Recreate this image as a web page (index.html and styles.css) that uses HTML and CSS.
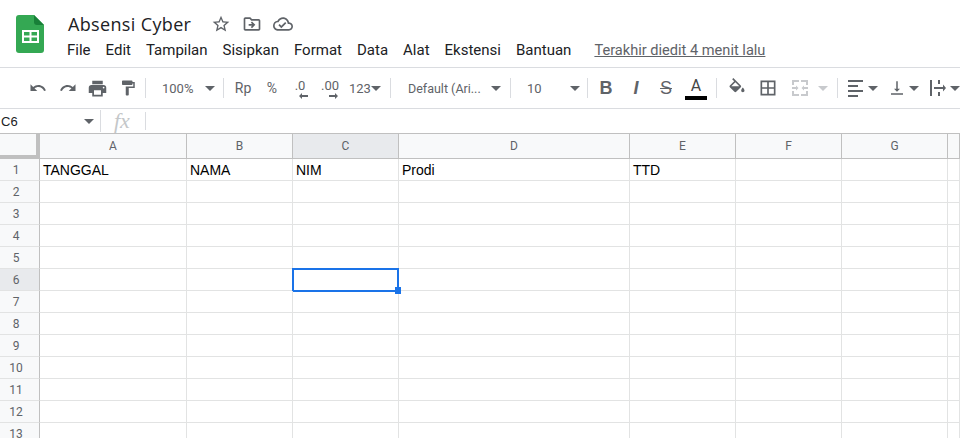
FILE: index.html
```html
<!DOCTYPE html>
<html lang="id">
<head>
  <meta charset="UTF-8" />
  <title>Absensi Cyber</title>
  <link rel="stylesheet" href="styles.css">
</head>
<body>
  <header class="topbar">
    <svg class="logo" width="28" height="38" viewBox="0 0 28 38">
      <path d="M3 0h15l10 10v25a3 3 0 0 1-3 3H3a3 3 0 0 1-3-3V3a3 3 0 0 1 3-3z" fill="#34a853"/>
      <path d="M18 0l10 10h-7a3 3 0 0 1-3-3z" fill="#188038"/>
      <path d="M6 15h17v13H6z M8 17v3.500h5.500V17z M15.500 17v3.500H21V17z M8 22.500V26h5.500v-3.500z M15.500 22.500V26H21v-3.500z" fill="#fff" fill-rule="evenodd"/>
    </svg>
    <div class="doc">
      <div class="title-line">
        <span class="doc-title">Absensi Cyber</span>
        <span class="title-icons">
          <svg width="20" height="20" viewBox="0 0 24 24"><path d="M22 9.24l-7.19-.62L12 2 9.19 8.63 2 9.24l5.46 4.73L5.82 21 12 17.27 18.18 21l-1.63-7.03L22 9.24zM12 15.4l-3.76 2.27 1-4.28-3.32-2.88 4.38-.38L12 6.1l1.71 4.04 4.38.38-3.32 2.88 1 4.28L12 15.4z"/></svg>
          <svg width="20" height="20" viewBox="0 0 24 24"><path d="M20 6h-8l-2-2H4c-1.1 0-2 .9-2 2v12c0 1.1.9 2 2 2h16c1.1 0 2-.9 2-2V8c0-1.1-.9-2-2-2zm0 12H4V6h5.17l2 2H20v10zm-8.01-9l-1.41 1.41L12.16 12H8v2h4.16l-1.59 1.59L11.99 17 16 13.01 11.99 9z"/></svg>
          <svg width="20" height="20" viewBox="0 0 24 24"><path d="M19.35 10.04C18.67 6.59 15.64 4 12 4 9.11 4 6.6 5.64 5.35 8.04 2.34 8.36 0 10.91 0 14c0 3.31 2.69 6 6 6h13c2.76 0 5-2.24 5-5 0-2.64-2.05-4.78-4.65-4.96zM19 18H6c-2.21 0-4-1.79-4-4 0-2.05 1.53-3.76 3.56-3.97l1.07-.11.5-.95C8.08 7.14 9.94 6 12 6c2.62 0 4.88 1.86 5.39 4.43l.3 1.5 1.53.11c1.56.1 2.78 1.41 2.78 2.96 0 1.65-1.35 3-3 3zm-9-3.82l-2.09-2.09L6.5 13.5 10 17l6.01-6.01-1.41-1.41z"/></svg>
        </span>
      </div>
      <nav class="menu">
        <span>File</span><span>Edit</span><span>Tampilan</span><span>Sisipkan</span><span>Format</span><span>Data</span><span>Alat</span><span>Ekstensi</span><span>Bantuan</span>
        <a class="last-edit">Terakhir diedit 4 menit lalu</a>
      </nav>
    </div>
  </header>

  <div class="toolbar">
    <span class="btn"><svg width="18" height="18" viewBox="0 0 24 24"><path d="M12.5 8c-2.65 0-5.05.99-6.9 2.6L2 7v9h9l-3.62-3.62c1.39-1.16 3.16-1.88 5.12-1.88 3.54 0 6.55 2.31 7.6 5.5l2.37-.78C21.08 11.03 17.15 8 12.5 8z"/></svg></span>
    <span class="btn"><svg width="18" height="18" viewBox="0 0 24 24"><path d="M18.4 10.6C16.55 8.99 14.15 8 11.5 8c-4.65 0-8.58 3.03-9.96 7.22L3.9 16c1.05-3.19 4.05-5.5 7.6-5.5 1.95 0 3.73.72 5.12 1.88L13 16h9V7l-3.6 3.6z"/></svg></span>
    <span class="btn print"><svg width="21" height="21" viewBox="0 0 24 24"><path d="M19 8H5c-1.66 0-3 1.34-3 3v6h4v4h12v-4h4v-6c0-1.66-1.34-3-3-3zm-3 11H8v-5h8v5zm3-7c-.55 0-1-.45-1-1s.45-1 1-1 1 .45 1 1-.45 1-1 1zm-1-9H6v4h12V3z"/></svg></span>
    <span class="btn"><svg width="18" height="18" viewBox="0 0 24 24"><path d="M18 4V3c0-.55-.45-1-1-1H5c-.55 0-1 .45-1 1v4c0 .55.45 1 1 1h12c.55 0 1-.45 1-1V6h1v4H9v11c0 .55.45 1 1 1h2c.55 0 1-.45 1-1v-9h8V4h-3z"/></svg></span>
    <i class="sep"></i>
    <span class="drop zoom-drop"><span>100%</span><b class="caret"></b></span>
    <i class="sep"></i>
    <span class="btn txt rp">Rp</span>
    <span class="btn txt pct">%</span>
    <span class="btn txt dec dec-less">.0<svg class="dec-arrow" width="9" height="6" viewBox="0 0 9 6"><path d="M0 3l3-3v2h6v2H3v2z"/></svg></span>
    <span class="btn txt dec">.00<svg class="dec-arrow" width="9" height="6" viewBox="0 0 9 6"><path d="M9 3L6 0v2H0v2h6v2z"/></svg></span>
    <span class="btn txt num">123<b class="caret"></b></span>
    <i class="sep"></i>
    <span class="drop font-drop"><span>Default (Ari...</span><b class="caret"></b></span>
    <i class="sep"></i>
    <span class="drop size-drop"><span>10</span><b class="caret"></b></span>
    <i class="sep"></i>
    <span class="btn glyph bold">B</span>
    <span class="btn glyph ital">I</span>
    <span class="btn glyph strike">S</span>
    <span class="btn color-a"><span>A</span><i class="color-bar"></i></span>
    <i class="sep"></i>
    <span class="btn fill"><svg width="20" height="20" viewBox="0 0 24 24"><path d="M16.56 8.94L7.62 0 6.21 1.41l2.38 2.38-5.15 5.15c-.59.59-.59 1.54 0 2.12l5.5 5.5c.29.29.68.44 1.06.44s.77-.15 1.06-.44l5.5-5.5c.59-.58.59-1.53 0-2.12zM5.21 10L10 5.21 14.79 10H5.21zM19 11.5s-2 2.17-2 3.5c0 1.1.9 2 2 2s2-.9 2-2c0-1.33-2-3.5-2-3.5z"/></svg></span>
    <span class="btn borders"><svg width="20" height="20" viewBox="0 0 24 24"><path d="M3 3v18h18V3H3zm8 16H5v-6h6v6zm0-8H5V5h6v6zm8 8h-6v-6h6v6zm0-8h-6V5h6v6z"/></svg></span>
    <span class="btn merge"><svg width="20" height="20" viewBox="0 0 20 20"><path d="M2 2h7v2H4v3H2z M11 2h7v5h-2V4h-5z M2 13h2v3h5v2H2z M16 13h2v5h-7v-2h5z M2 9h4V7.500L8.500 10 6 12.500V11H2z M18 9h-4V7.500L11.500 10l2.500 2.500V11h4z"/></svg><b class="caret"></b></span>
    <i class="sep"></i>
    <span class="btn wide"><svg width="18" height="18" viewBox="0 0 18 18"><path d="M1 1h15v2H1z M1 6h10v2H1z M1 11h15v2H1z M1 16h10v2H1z"/></svg><b class="caret"></b></span>
    <span class="btn wide"><svg width="18" height="18" viewBox="0 0 24 24"><path d="M16 13h-3V3h-2v10H8l4 4 4-4zM4 19v2h16v-2H4z"/></svg><b class="caret"></b></span>
    <span class="btn wide"><svg width="18" height="18" viewBox="0 0 18 18"><path d="M1 1h2v16H1z M9 1h2v4H9z M9 13h2v4H9z M5 8h9V5.500L17 9l-3 3.500V10H5z"/></svg><b class="caret"></b></span>
  </div>

  <div class="formula">
    <div class="namebox"><span>C6</span><b class="caret"></b></div>
    <div class="fx">fx</div>
    <div class="input"></div>
  </div>

  <div class="sheet">
    <div class="row head">
      <div class="rh corner"></div>
      <div class="ch">A</div><div class="ch">B</div><div class="ch active">C</div><div class="ch">D</div><div class="ch">E</div><div class="ch">F</div><div class="ch">G</div><div class="ch"></div>
    </div>
    <div class="row">
      <div class="rh">1</div>
      <div class="c">TANGGAL</div><div class="c">NAMA</div><div class="c">NIM</div><div class="c">Prodi</div><div class="c">TTD</div><div class="c"></div><div class="c"></div><div class="c"></div>
    </div>
    <div class="row"><div class="rh">2</div><div class="c"></div><div class="c"></div><div class="c"></div><div class="c"></div><div class="c"></div><div class="c"></div><div class="c"></div><div class="c"></div></div>
    <div class="row"><div class="rh">3</div><div class="c"></div><div class="c"></div><div class="c"></div><div class="c"></div><div class="c"></div><div class="c"></div><div class="c"></div><div class="c"></div></div>
    <div class="row"><div class="rh">4</div><div class="c"></div><div class="c"></div><div class="c"></div><div class="c"></div><div class="c"></div><div class="c"></div><div class="c"></div><div class="c"></div></div>
    <div class="row"><div class="rh">5</div><div class="c"></div><div class="c"></div><div class="c"></div><div class="c"></div><div class="c"></div><div class="c"></div><div class="c"></div><div class="c"></div></div>
    <div class="row">
      <div class="rh active">6</div>
      <div class="c"></div><div class="c"></div><div class="c selected"><i class="handle"></i></div><div class="c"></div><div class="c"></div><div class="c"></div><div class="c"></div><div class="c"></div>
    </div>
    <div class="row"><div class="rh">7</div><div class="c"></div><div class="c"></div><div class="c"></div><div class="c"></div><div class="c"></div><div class="c"></div><div class="c"></div><div class="c"></div></div>
    <div class="row"><div class="rh">8</div><div class="c"></div><div class="c"></div><div class="c"></div><div class="c"></div><div class="c"></div><div class="c"></div><div class="c"></div><div class="c"></div></div>
    <div class="row"><div class="rh">9</div><div class="c"></div><div class="c"></div><div class="c"></div><div class="c"></div><div class="c"></div><div class="c"></div><div class="c"></div><div class="c"></div></div>
    <div class="row"><div class="rh">10</div><div class="c"></div><div class="c"></div><div class="c"></div><div class="c"></div><div class="c"></div><div class="c"></div><div class="c"></div><div class="c"></div></div>
    <div class="row"><div class="rh">11</div><div class="c"></div><div class="c"></div><div class="c"></div><div class="c"></div><div class="c"></div><div class="c"></div><div class="c"></div><div class="c"></div></div>
    <div class="row"><div class="rh">12</div><div class="c"></div><div class="c"></div><div class="c"></div><div class="c"></div><div class="c"></div><div class="c"></div><div class="c"></div><div class="c"></div></div>
    <div class="row"><div class="rh">13</div><div class="c"></div><div class="c"></div><div class="c"></div><div class="c"></div><div class="c"></div><div class="c"></div><div class="c"></div><div class="c"></div></div>
  </div>
</body>
</html>
```

FILE: styles.css
```css
html,
body {
  margin: 0;
  height: 438px;
  overflow: hidden;
}
body {
  background-color: #fff;
  font-family: Roboto, sans-serif;
  color: #202124;
}
svg {
  fill: #5f6368;
  display: block;
}

/* top */
.topbar {
  height: 67px;
  display: flex;
  border-bottom: 1px solid #dadce0;
}
.logo {
  margin: 15px 0 0 16px;
}
.doc {
  margin-left: 23px;
}
.title-line {
  display: flex;
  align-items: center;
  height: 26px;
  margin-top: 11px;
}
.doc-title {
  font-family: "Open Sans", sans-serif;
  font-size: 18px;
  letter-spacing: .35px;
  width: 143px;
  margin-left: 1px;
}
.title-icons {
  display: flex;
  gap: 11px;
}
.menu {
  display: flex;
  gap: 15px;
  font-size: 15px;
  line-height: 20px;
  margin-top: 3px;
  white-space: nowrap;
}
.last-edit {
  margin-left: 8px;
  font-size: 14.600px;
  color: #5f6368;
  text-decoration: underline;
}

/* toolbar */
.toolbar {
  height: 40px;
  display: flex;
  align-items: center;
  padding-left: 23px;
  border-bottom: 1px solid #dadce0;
  color: #5f6368;
  white-space: nowrap;
  overflow: hidden;
}
.btn {
  width: 30px;
  height: 28px;
  flex: none;
  display: flex;
  align-items: center;
  justify-content: center;
  position: relative;
}
.print {
  margin-left: -1px;
  margin-right: 1px;
}
.sep {
  width: 1px;
  height: 20px;
  flex: none;
  margin: 0 3px 0 2px;
  background-color: #dadce0;
}
.caret {
  width: 0;
  height: 0;
  flex: none;
  border-left: 5px solid transparent;
  border-right: 5px solid transparent;
  border-top: 5px solid #5f6368;
}
.drop {
  display: flex;
  align-items: center;
  justify-content: space-between;
  flex: none;
  box-sizing: border-box;
  font-size: 13px;
}
.zoom-drop {
  width: 72px;
  padding: 0 6px 0 13px;
}
.font-drop {
  width: 114px;
  padding: 0 7px 0 14px;
  font-size: 12.500px;
}
.size-drop {
  width: 71px;
  padding: 0 5px 0 13px;
}
.txt {
  font-size: 14px;
}
.rp {
  margin-left: 1px;
}
.pct {
  margin-left: -1px;
}
.dec {
  font-size: 13px;
  padding-bottom: 5px;
  box-sizing: border-box;
}
.dec-less {
  margin-left: -2px;
}
.dec-arrow {
  position: absolute;
  bottom: 3px;
  left: 14px;
}
.num {
  width: 39px;
  font-size: 13px;
  gap: 0;
  justify-content: flex-start;
  margin-left: 4px;
}
.glyph {
  font-size: 18px;
  font-family: "Liberation Sans", sans-serif;
}
.bold {
  font-weight: bold;
}
.ital {
  font-weight: bold;
  font-style: italic;
}
.strike {
  text-decoration: line-through;
}
.color-a {
  flex-direction: column;
  font-size: 16px;
  color: #444746;
  line-height: 20px;
  margin-right: 3px;
}
.color-bar {
  width: 22px;
  height: 4px;
  flex: none;
  background-color: #000;
}
.fill {
  margin-left: 2px;
}
.borders {
  margin-left: 1px;
}
.merge {
  width: 52px;
  gap: 8px;
  padding-left: 7px;
  box-sizing: border-box;
  justify-content: flex-start;
}
.merge svg {
  fill: #c8cacd;
}
.merge .caret {
  border-top-color: #c8cacd;
}
.wide {
  width: 41px;
  gap: 3px;
  padding-left: 6px;
  box-sizing: border-box;
  justify-content: flex-start;
}

/* formula bar */
.formula {
  height: 24px;
  display: flex;
  align-items: center;
  border-bottom: 1px solid #c0c0c0;
}
.namebox {
  width: 101px;
  height: 22px;
  box-sizing: border-box;
  padding: 0 6px 0 1px;
  display: flex;
  align-items: center;
  justify-content: space-between;
  font-family: "Liberation Sans", sans-serif;
  font-size: 13px;
  border-right: 1px solid #dadce0;
}
.fx {
  width: 45px;
  height: 18px;
  line-height: 18px;
  box-sizing: border-box;
  padding-left: 13px;
  border-right: 1px solid #dadce0;
  font-family: "Liberation Serif", serif;
  font-style: italic;
  font-size: 22px;
  color: #c4c7c9;
}

/* grid */
.row {
  display: grid;
  grid-template-columns: 40px 147px 106px 106px 231px 106px 106px 106px 1fr;
  grid-template-rows: 22px;
}
.row.head {
  grid-template-rows: 25px;
}
.rh,
.ch {
  background-color: #f8f9fa;
  color: #5f6368;
  font-size: 12px;
  display: flex;
  align-items: center;
  justify-content: center;
  box-sizing: border-box;
}
.rh {
  border-right: 1px solid #c0c0c0;
  border-bottom: 1px solid #e2e3e3;
  padding-right: 7px;
}
.ch {
  border-right: 1px solid #c0c0c0;
  border-bottom: 1px solid #c0c0c0;
}
.corner {
  border-right: 4px solid #c0c0c0;
  border-bottom: 4px solid #c0c0c0;
}
.active {
  background-color: #e8eaed;
}
.c {
  border-right: 1px solid #e2e3e3;
  border-bottom: 1px solid #e2e3e3;
  box-sizing: border-box;
  padding: 0 3px;
  font-family: "Liberation Sans", sans-serif;
  font-size: 14px;
  line-height: 23px;
  color: #000;
  position: relative;
}
.selected::after {
  content: "";
  position: absolute;
  left: -1px;
  top: -1px;
  width: 107px;
  height: 24px;
  box-sizing: border-box;
  border: 2px solid #1a73e8;
}
.handle {
  position: absolute;
  right: -3px;
  bottom: -4px;
  width: 6px;
  height: 7px;
  background-color: #1a73e8;
  z-index: 1;
}
```
